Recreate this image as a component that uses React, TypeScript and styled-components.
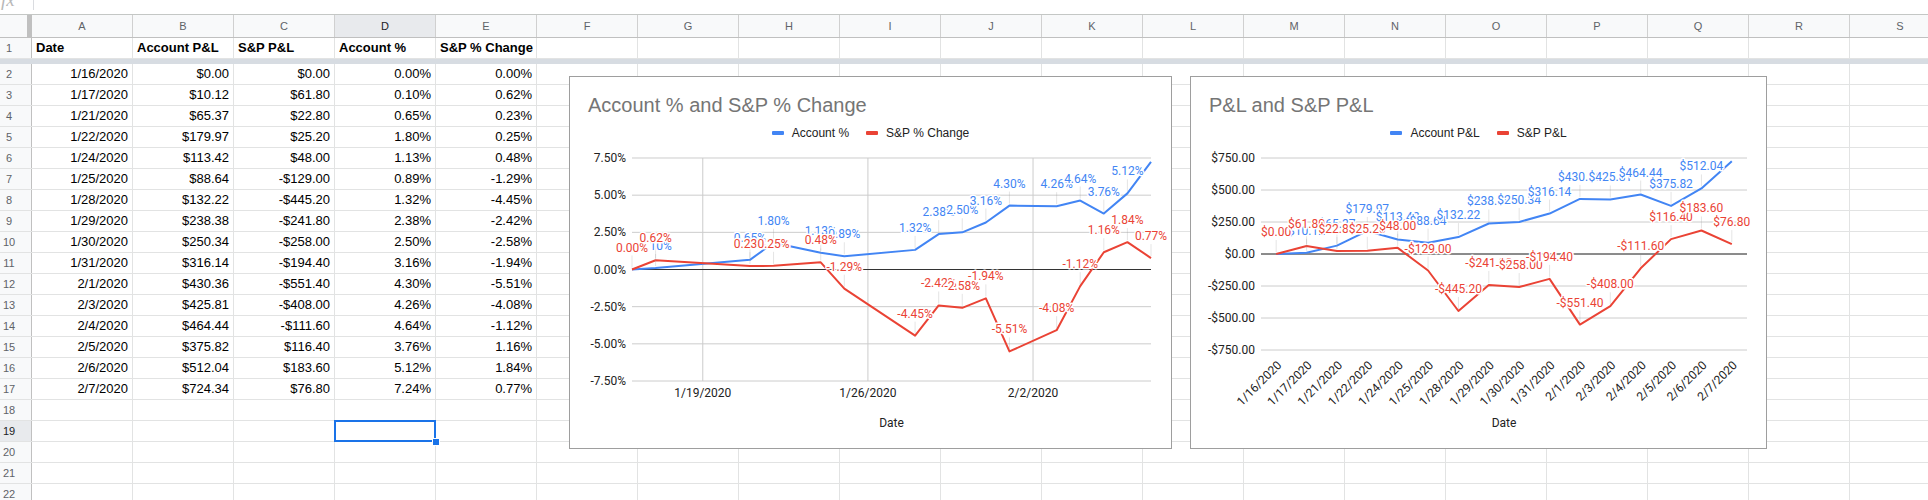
import React from "react";
import styled, { createGlobalStyle } from "styled-components";

const GlobalStyle = createGlobalStyle`
  html, body {
    margin: 0;
    padding: 0;
    background: #ffffff;
  }
  body {
    font-family: "Liberation Sans", Arial, sans-serif;
    overflow: hidden;
  }
`;

const BLUE = "#4285f4";
const RED = "#ea4335";
const LABEL_FONT = "Roboto, 'Liberation Sans', Arial, sans-serif";

const dates = [
  "1/16/2020", "1/17/2020", "1/21/2020", "1/22/2020", "1/24/2020", "1/25/2020",
  "1/28/2020", "1/29/2020", "1/30/2020", "1/31/2020", "2/1/2020", "2/3/2020",
  "2/4/2020", "2/5/2020", "2/6/2020", "2/7/2020",
];
const accountPL = [0, 10.12, 65.37, 179.97, 113.42, 88.64, 132.22, 238.38, 250.34, 316.14, 430.36, 425.81, 464.44, 375.82, 512.04, 724.34];
const spPL = [0, 61.8, 22.8, 25.2, 48, -129, -445.2, -241.8, -258, -194.4, -551.4, -408, -111.6, 116.4, 183.6, 76.8];
const accountPct = [0, 0.1, 0.65, 1.8, 1.13, 0.89, 1.32, 2.38, 2.5, 3.16, 4.3, 4.26, 4.64, 3.76, 5.12, 7.24];
const spPct = [0, 0.62, 0.23, 0.25, 0.48, -1.29, -4.45, -2.42, -2.58, -1.94, -5.51, -4.08, -1.12, 1.16, 1.84, 0.77];

const usd = (v: number) => (v < 0 ? "-$" : "$") + Math.abs(v).toFixed(2);
const pct = (v: number) => v.toFixed(2) + "%";

// days since 1/16 for the date axis of the first chart
const dayOffset = (d: string) => {
  const [m, day] = d.split("/").map(Number);
  return m === 1 ? day - 16 : 15 + day;
};

const columns = "ABCDEFGHIJKLMNOPQRS".split("");

/* ---------- sheet ---------- */

const Sheet = styled.div`
  position: relative;
  width: 1928px;
  height: 500px;
  overflow: hidden;
  background: #ffffff;
`;

const FormulaBar = styled.div`
  display: flex;
  height: 14px;
  border-bottom: 1px solid #c4c7c5;
  overflow: hidden;
`;

const FxLabel = styled.div`
  width: 32px;
  margin-top: -11px;
  padding-left: 1px;
  font-family: "Liberation Serif", serif;
  font-style: italic;
  font-size: 19px;
  color: #b8b8b8;
`;

const FxDivider = styled.div`
  width: 1px;
  height: 10px;
  background: #dadce0;
`;

const HeaderRow = styled.div`
  display: flex;
  height: 23px;
  box-sizing: border-box;
  border-bottom: 1px solid #c0c0c0;
  background: #f8f9fa;
`;

const Corner = styled.div`
  flex: none;
  width: 32px;
  box-sizing: border-box;
  border-right: 5px solid #c0c0c0;
`;

const ColHeader = styled.div<{ $active?: boolean }>`
  flex: none;
  width: 101px;
  box-sizing: border-box;
  border-right: 1px solid #d0d0d0;
  display: flex;
  align-items: center;
  justify-content: center;
  font-size: 11px;
  color: ${(p) => (p.$active ? "#202124" : "#5f6368")};
  background: ${(p) => (p.$active ? "#e8eaed" : "#f8f9fa")};
`;

const Row = styled.div`
  display: flex;
  height: 21px;
  box-sizing: border-box;
  border-bottom: 1px solid #e2e3e3;
`;

const RowHeader = styled.div<{ $active?: boolean }>`
  flex: none;
  width: 32px;
  box-sizing: border-box;
  border-right: 1px solid #c0c0c0;
  display: flex;
  align-items: center;
  justify-content: center;
  padding-right: 13px;
  font-size: 11px;
  color: ${(p) => (p.$active ? "#202124" : "#5f6368")};
  background: ${(p) => (p.$active ? "#e8eaed" : "#f8f9fa")};
`;

const Cell = styled.div<{ $align?: "left" | "right"; $bold?: boolean; $selected?: boolean }>`
  position: relative;
  flex: none;
  width: 101px;
  box-sizing: border-box;
  border-right: 1px solid #e2e3e3;
  padding: 0 4px 2px 4px;
  display: flex;
  align-items: flex-end;
  justify-content: ${(p) => (p.$align === "right" ? "flex-end" : "flex-start")};
  font-size: 13px;
  line-height: 16px;
  font-weight: ${(p) => (p.$bold ? 700 : 400)};
  color: #000000;
  white-space: nowrap;

  ${(p) =>
    p.$selected &&
    `
    &::after {
      content: "";
      position: absolute;
      top: -1px;
      left: -1px;
      right: -1px;
      bottom: -1px;
      border: 2px solid #1a73e8;
    }
    &::before {
      content: "";
      position: absolute;
      right: -5px;
      bottom: -5px;
      width: 8px;
      height: 8px;
      box-sizing: border-box;
      background: #1a73e8;
      border: 1px solid #ffffff;
      z-index: 1;
    }
  `}
`;

const FreezeBar = styled.div`
  height: 5px;
  background: #d7dce2;
`;

/* ---------- charts ---------- */

const ChartCard = styled.div<{ $left: number; $width: number }>`
  position: absolute;
  top: 76px;
  left: ${(p) => p.$left}px;
  width: ${(p) => p.$width}px;
  height: 373px;
  box-sizing: border-box;
  border: 1px solid #9e9e9e;
  background: #ffffff;
  display: flex;
  flex-direction: column;
`;

const ChartTitle = styled.div`
  padding: 16px 18px 0;
  height: 24px;
  font-size: 20px;
  line-height: 24px;
  color: #757575;
  white-space: nowrap;
`;

const Legend = styled.div`
  margin-top: 9px;
  display: flex;
  justify-content: center;
  gap: 17px;
  font-size: 12px;
  line-height: 14px;
  color: #222222;
`;

const LegendItem = styled.div`
  display: flex;
  align-items: center;
  gap: 8px;
`;

const Swatch = styled.span<{ $color: string }>`
  width: 12px;
  height: 4px;
  border-radius: 1px;
  background: ${(p) => p.$color};
`;

const PlotSvg = styled.svg`
  display: block;
  flex: none;
  font-family: ${LABEL_FONT};
`;

interface Series {
  color: string;
  values: number[];
  labels: string[];
  hidden: number[];
}

interface PlotProps {
  width: number;
  x0: number;
  x1: number;
  yTicks: { y: number; label: string }[];
  zeroY: number;
  xOf: (i: number) => number;
  yOf: (v: number) => number;
  series: Series[];
  vGrid?: { x: number; label: string }[];
  rotated?: string[];
}

const AXIS_TITLE_Y = 287;

const Plot: React.FC<PlotProps> = ({ width, x0, x1, yTicks, zeroY, xOf, yOf, series, vGrid, rotated }) => {
  const top = yTicks[0].y;
  const bottom = yTicks[yTicks.length - 1].y;
  return (
    <PlotSvg width={width} height={308} viewBox={`0 0 ${width} 308`}>
      {yTicks.map((t) => (
        <g key={t.label}>
          <line x1={x0} x2={x1} y1={t.y} y2={t.y} stroke="#cccccc" strokeWidth={1} />
          <text x={x0 - 6} y={t.y + 4} fontSize={12} fill="#222" textAnchor="end">
            {t.label}
          </text>
        </g>
      ))}
      {vGrid?.map((g) => (
        <g key={g.label}>
          <line x1={g.x} x2={g.x} y1={top} y2={bottom} stroke="#cccccc" strokeWidth={1} />
          <text x={g.x} y={bottom + 16} fontSize={12} fill="#222" textAnchor="middle">
            {g.label}
          </text>
        </g>
      ))}
      {rotated?.map((d, i) => (
        <text
          key={d}
          x={xOf(i) + 6}
          y={bottom + 16}
          fontSize={12}
          fill="#222"
          textAnchor="end"
          transform={`rotate(-45 ${xOf(i) + 6} ${bottom + 16})`}
        >
          {d}
        </text>
      ))}
      <line x1={x0} x2={x1} y1={zeroY} y2={zeroY} stroke="#333333" strokeWidth={1} />
      {series.map((s) => (
        <polyline
          key={s.color}
          points={s.values.map((v, i) => `${xOf(i)},${yOf(v)}`).join(" ")}
          fill="none"
          stroke={s.color}
          strokeWidth={2}
          strokeLinejoin="round"
        />
      ))}
      {series.map((s) =>
        s.values.map((v, i) =>
          s.hidden.includes(i) ? null : (
            <line
              key={`${s.color}-stem-${i}`}
              x1={xOf(i)}
              x2={xOf(i)}
              y1={yOf(v) - 14}
              y2={yOf(v) - 2}
              stroke="#999"
              strokeOpacity={0.25}
            />
          )
        )
      )}
      {series.map((s) =>
        s.values.map((v, i) =>
          s.hidden.includes(i) ? null : (
            <text
              key={`${s.color}-lbl-${i}`}
              x={xOf(i)}
              y={yOf(v) - 18}
              fontSize={12}
              fill={s.color}
              textAnchor="middle"
              stroke="#ffffff"
              strokeWidth={3}
              strokeLinejoin="round"
              paintOrder="stroke"
            >
              {s.labels[i]}
            </text>
          )
        )
      )}
      <text x={(x0 + x1) / 2} y={AXIS_TITLE_Y} fontSize={12} fill="#222" textAnchor="middle">
        Date
      </text>
    </PlotSvg>
  );
};

const ChartLegend: React.FC<{ items: [string, string][] }> = ({ items }) => (
  <Legend>
    {items.map(([color, name]) => (
      <LegendItem key={name}>
        <Swatch $color={color} />
        {name}
      </LegendItem>
    ))}
  </Legend>
);

const PercentChart: React.FC = () => {
  const step = 37.17 / 2.5;
  const zero = 129.5;
  const xDay = (d: number) => 62 + d * (519 / 22);
  const xOf = (i: number) => xDay(dayOffset(dates[i]));
  const yOf = (v: number) => zero - v * step;
  const ticks = [7.5, 5, 2.5, 0, -2.5, -5, -7.5].map((v) => ({ y: yOf(v), label: pct(v) }));
  return (
    <ChartCard $left={569} $width={603}>
      <ChartTitle>Account % and S&amp;P % Change</ChartTitle>
      <ChartLegend items={[[BLUE, "Account %"], [RED, "S&P % Change"]]} />
      <Plot
        width={601}
        x0={62}
        x1={581}
        yTicks={ticks}
        zeroY={zero}
        xOf={xOf}
        yOf={yOf}
        vGrid={[
          { x: xDay(3), label: "1/19/2020" },
          { x: xDay(10), label: "1/26/2020" },
          { x: xDay(17), label: "2/2/2020" },
        ]}
        series={[
          { color: BLUE, values: accountPct, labels: accountPct.map(pct), hidden: [0, 15] },
          { color: RED, values: spPct, labels: spPct.map(pct), hidden: [] },
        ]}
      />
    </ChartCard>
  );
};

const MoneyChart: React.FC = () => {
  const zero = 114;
  const xOf = (i: number) => 70 + 486 / 32 + i * (486 / 16);
  const yOf = (v: number) => zero - v * (32 / 250);
  const ticks = [750, 500, 250, 0, -250, -500, -750].map((v) => ({ y: yOf(v), label: usd(v) }));
  return (
    <ChartCard $left={1190} $width={577}>
      <ChartTitle>P&amp;L and S&amp;P P&amp;L</ChartTitle>
      <ChartLegend items={[[BLUE, "Account P&L"], [RED, "S&P P&L"]]} />
      <Plot
        width={575}
        x0={70}
        x1={556}
        yTicks={ticks}
        zeroY={zero}
        xOf={xOf}
        yOf={yOf}
        rotated={dates}
        series={[
          { color: BLUE, values: accountPL, labels: accountPL.map(usd), hidden: [0, 15] },
          { color: RED, values: spPL, labels: spPL.map(usd), hidden: [] },
        ]}
      />
    </ChartCard>
  );
};

const EmptyCells: React.FC<{ from: number; selected?: number }> = ({ from, selected }) => (
  <>
    {columns.slice(from).map((c, i) => (
      <Cell key={c} $selected={selected === from + i} />
    ))}
  </>
);

const App: React.FC = () => {
  const blankRows = [18, 19, 20, 21, 22];
  return (
    <>
      <GlobalStyle />
      <Sheet>
        <FormulaBar>
          <FxLabel>fx</FxLabel>
          <FxDivider />
        </FormulaBar>
        <HeaderRow>
          <Corner />
          {columns.map((c) => (
            <ColHeader key={c} $active={c === "D"}>
              {c}
            </ColHeader>
          ))}
        </HeaderRow>
        <Row>
          <RowHeader>1</RowHeader>
          <Cell $bold>Date</Cell>
          <Cell $bold>Account P&amp;L</Cell>
          <Cell $bold>S&amp;P P&amp;L</Cell>
          <Cell $bold>Account %</Cell>
          <Cell $bold>S&amp;P % Change</Cell>
          <EmptyCells from={5} />
        </Row>
        <FreezeBar />
        {dates.map((d, i) => (
          <Row key={d}>
            <RowHeader>{i + 2}</RowHeader>
            <Cell $align="right">{d}</Cell>
            <Cell $align="right">{usd(accountPL[i])}</Cell>
            <Cell $align="right">{usd(spPL[i])}</Cell>
            <Cell $align="right">{pct(accountPct[i])}</Cell>
            <Cell $align="right">{pct(spPct[i])}</Cell>
            <EmptyCells from={5} />
          </Row>
        ))}
        {blankRows.map((n) => (
          <Row key={n}>
            <RowHeader $active={n === 19}>{n}</RowHeader>
            <EmptyCells from={0} selected={n === 19 ? 3 : undefined} />
          </Row>
        ))}
        <PercentChart />
        <MoneyChart />
      </Sheet>
    </>
  );
};

export default App;
